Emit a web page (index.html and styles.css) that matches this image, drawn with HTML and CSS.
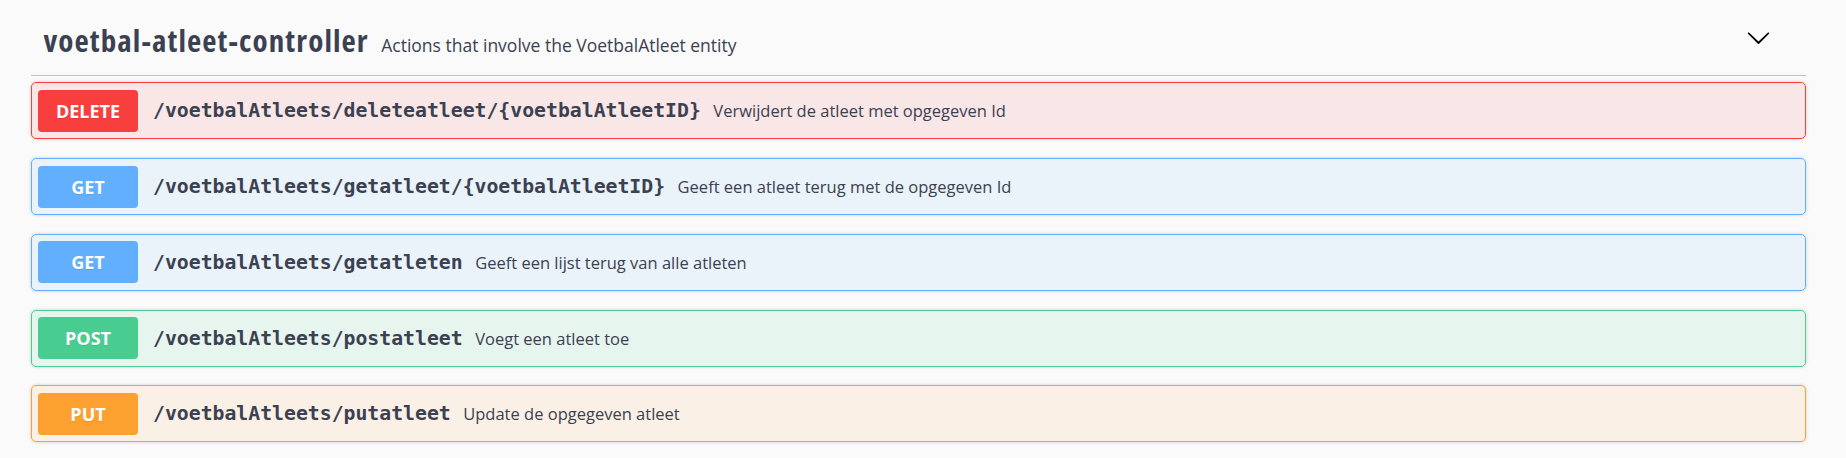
FILE: index.html
```html
<!DOCTYPE html>
<html lang="nl">
<head>
<meta charset="utf-8">
<title>voetbal-atleet-controller</title>
<link rel="stylesheet" href="styles.css">
</head>
<body>
<div class="wrapper">
  <div class="tag">
    <div class="tag-text">
      <span class="tag-name">voetbal-atleet-controller</span>
      <small class="tag-summary">Actions that involve the VoetbalAtleet entity</small>
    </div>
    <button class="expand" aria-label="collapse">
      <svg width="25" height="25" viewBox="0 0 20 20"><path d="M17.418 6.109c.272-.268.709-.268.979 0s.271.701 0 .969l-7.908 7.83c-.27.268-.707.268-.979 0l-7.908-7.830c-.27-.268-.27-.701 0-.969.271-.268.709-.268.979 0L10 13.25l7.418-7.141z" fill="#000"/></svg>
    </button>
  </div>

  <div class="opblock op-delete">
    <span class="method">DELETE</span>
    <span class="path">/voetbalAtleets/deleteatleet/{voetbalAtleetID}</span>
    <span class="desc">Verwijdert de atleet met opgegeven Id</span>
  </div>
  <div class="opblock op-get">
    <span class="method">GET</span>
    <span class="path">/voetbalAtleets/getatleet/{voetbalAtleetID}</span>
    <span class="desc">Geeft een atleet terug met de opgegeven Id</span>
  </div>
  <div class="opblock op-get">
    <span class="method">GET</span>
    <span class="path">/voetbalAtleets/getatleten</span>
    <span class="desc">Geeft een lijst terug van alle atleten</span>
  </div>
  <div class="opblock op-post">
    <span class="method">POST</span>
    <span class="path">/voetbalAtleets/postatleet</span>
    <span class="desc">Voegt een atleet toe</span>
  </div>
  <div class="opblock op-put">
    <span class="method">PUT</span>
    <span class="path">/voetbalAtleets/putatleet</span>
    <span class="desc">Update de opgegeven atleet</span>
  </div>
</div>
</body>
</html>
```
FILE: styles.css
```css
html, body {
  margin: 0;
  padding: 0;
  background: #fafafa;
}
body {
  color: #3b4151;
  font-family: "Open Sans", "Noto Sans", sans-serif;
}
.wrapper {
  padding: 0 40px 0 31px;
}
.tag {
  display: flex;
  align-items: center;
  height: 75px;
  padding: 0 35px 0 12.5px;
  border-bottom: 1px solid rgba(59, 65, 81, 0.3);
  margin-bottom: 6.25px;
}
.tag-text {
  flex: 1;
  display: flex;
  align-items: baseline;
  margin-top: 6px;
}
.tag-name {
  font-size: 31px;
  line-height: 1;
  font-weight: 700;
  font-stretch: 75%;
  letter-spacing: 1.1px;
  color: #3b4151;
}
.tag-summary {
  font-size: 17.5px;
  font-weight: 400;
  padding: 0 12.5px;
  color: #3b4151;
}
.expand {
  border: none;
  background: none;
  padding: 0;
  margin: 0;
  width: 25px;
  height: 25px;
  display: flex;
}
.opblock {
  display: flex;
  align-items: center;
  border: 1px solid;
  border-radius: 5px;
  box-shadow: 0 0 3.75px rgba(0, 0, 0, 0.19);
  padding: 6.5px 6px;
  margin-bottom: 18.75px;
}
.method {
  width: 100px;
  height: 42px;
  display: flex;
  align-items: center;
  justify-content: center;
  border-radius: 3.75px;
  color: #fff;
  font-size: 18px;
  font-weight: 700;
  text-shadow: 0 1px 0 rgba(0, 0, 0, 0.1);
  flex-shrink: 0;
}
.path {
  font-family: "DejaVu Sans Mono", "Liberation Mono", monospace;
  font-weight: 700;
  font-size: 19.8px;
  padding: 0 12.5px 0 15px;
  color: #3b4151;
  white-space: nowrap;
}
.desc {
  font-size: 16.5px;
  color: #3b4151;
  white-space: nowrap;
}
.op-delete { background: rgba(249, 62, 62, 0.1); border-color: #f93e3e; }
.op-delete .method { background: #f93e3e; }
.op-get { background: rgba(97, 175, 254, 0.1); border-color: #61affe; }
.op-get .method { background: #61affe; }
.op-post { background: rgba(73, 204, 144, 0.1); border-color: #49cc90; }
.op-post .method { background: #49cc90; }
.op-put { background: rgba(252, 161, 48, 0.1); border-color: #fca130; }
.op-put .method { background: #fca130; }
```
